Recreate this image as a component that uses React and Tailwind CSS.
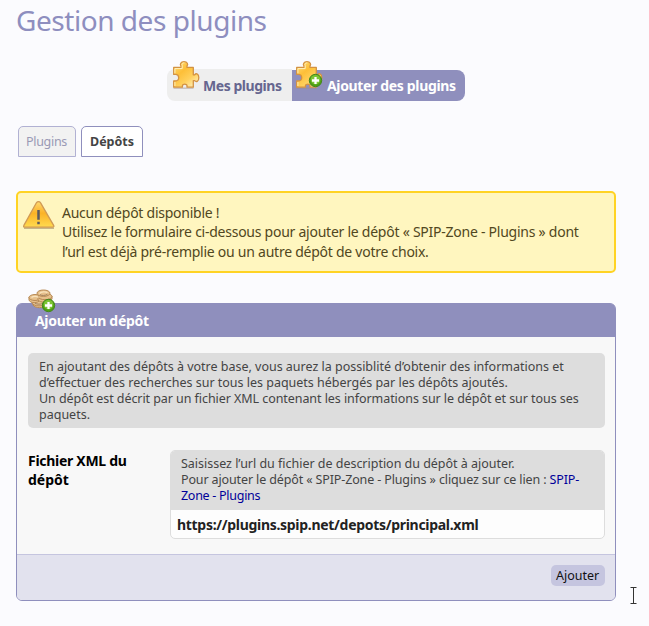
import React from "react";

function Puzzle({ plus, className }) {
  return (
    <svg className={className} width="32" height="32" viewBox="0 0 32 32">
      <defs>
        <linearGradient id="pz" x1="0" y1="0" x2=".8" y2="1">
          <stop offset="0" stopColor="#ffdf80" />
          <stop offset=".4" stopColor="#fdbf38" />
          <stop offset=".7" stopColor="#ffd05c" />
          <stop offset="1" stopColor="#ffeeb8" />
        </linearGradient>
      </defs>
      <path d="M2.5 28.2H22.5" stroke="#a08f84" strokeOpacity=".45" strokeWidth="1.5" />
      <path
        d="M2.7 7.4H10V6C8.6 4.4 9.6 1.7 13 1.7S17.4 4.4 16 6V7.4H22.3V14.8H23.6C25.2 12.8 27.8 13.8 27.8 17.8S25.2 22.2 23.6 20.6H22.3V27.2H16V25.8C16.2 23.8 11.4 23.6 11.4 25.8V27.2H2.7V20.8H5C8.6 21 8.6 14.8 5 14.4H2.7Z"
        fill="url(#pz)" stroke="#d39243" strokeWidth="1.3" strokeLinejoin="round"
      />
      <path d="M3.9 13.4V8.6H11.2V5.4C10.4 3.8 12 2.8 13.4 2.9M3.9 26V22" fill="none" stroke="#fff0bb" strokeWidth="1" />
      {plus && <Plus x={21.5} y={20.5} />}
    </svg>
  );
}

function Plus({ x, y }) {
  return (
    <g>
      <circle cx={x} cy={y} r="6.2" fill="#4ea015" stroke="#44861d" strokeWidth="1" />
      <circle cx={x} cy={y - 0.8} r="4.8" fill="#7cc535" />
      <path d={`M${x} ${y - 3.5}V${y + 3.5}M${x - 3.5} ${y}H${x + 3.5}`} stroke="#fff" strokeWidth="2.3" />
    </g>
  );
}

function Warning() {
  return (
    <svg className="mt-[7px] ml-[5px] shrink-0" width="32" height="30" viewBox="0 0 32 30">
      <defs>
        <linearGradient id="wn" x1="0" y1="0" x2="0" y2="1">
          <stop offset="0" stopColor="#ffd970" />
          <stop offset=".45" stopColor="#fbb226" />
          <stop offset="1" stopColor="#ffdb50" />
        </linearGradient>
      </defs>
      <path d="M1 28.1H31" stroke="#9a8560" strokeOpacity=".7" strokeWidth="1.4" />
      <path d="M15.5 1.7C16.4 1.7 17.1 2.1 17.6 2.8L30.6 25.3C31.2 26.6 30.7 27.2 29.5 27.2H1.9C.6 27.2.3 26.3.9 25.3L13.4 2.8C13.9 2.1 14.6 1.7 15.5 1.7Z" fill="url(#wn)" stroke="#d09a55" strokeWidth="1.3" />
      <path d="M15.5 10V19.7M15.5 21.8V24.2" stroke="#5b5960" strokeWidth="2.5" />
    </svg>
  );
}

function Coins() {
  return (
    <svg className="absolute -top-[16px] left-[10px]" width="32" height="28" viewBox="0 0 32 28">
      <g fill="#e6c08c" stroke="#b88a55" strokeWidth="1">
        <path d="M6 14V17C8 20.5 17 20.5 19 17V13Z" />
        <ellipse cx="12" cy="14.5" rx="7" ry="3.4" />
        <path d="M2 9V12C3 15.5 11 15.5 13 12V9Z" />
        <ellipse cx="8" cy="9.5" rx="6" ry="3" />
        <path d="M11 9V12C13 15 23 15 25 11V8Z" />
        <ellipse cx="18" cy="8.5" rx="7" ry="3.2" />
        <ellipse cx="16.5" cy="5.2" rx="6.5" ry="3.2" />
      </g>
      <path d="M12.5 5.5C14 3.6 19 3.4 20.5 4.8M4.5 9.5C6 8 10 8 11.5 9.5" fill="none" stroke="#f8e3bd" strokeWidth="1.3" />
      <path d="M13 6.6C15 7.8 18 7.8 20.5 6.2M8 15.2C10 16.5 14 16.5 16 15.2" fill="none" stroke="#8f7256" strokeWidth=".8" />
      <Plus x={21.5} y={17.5} />
    </svg>
  );
}

export default function App() {
  return (
    <div className="h-[626px] w-[649px] overflow-hidden bg-[#fbfbfe] pl-4 font-['Noto_Sans','Open_Sans',sans-serif] whitespace-nowrap text-[#444]">
      <h1 className="h-[61px] pt-[2px] text-[28px] leading-[36px] tracking-[-0.45px] text-[#8e8ebf]">
        <span>Gestion des plugins</span>
      </h1>

      <nav className="ml-[151px] flex h-[42px] text-sm font-bold">
        <a className="mt-2 flex h-8 w-[125px] rounded-l-lg bg-[#eee] text-[#66668f]">
          <Puzzle className="-mt-[9px] ml-1 shrink-0" />
          <span className="pt-[7px] leading-5 tracking-[-0.45px]">Mes plugins</span>
        </a>
        <a className="mt-[9px] flex h-[31px] w-[173px] rounded-r-lg bg-[#8f8fbd] text-white">
          <Puzzle plus className="-mt-[10px] ml-[2px] shrink-0" />
          <span className="pt-[6px] pl-px leading-5 tracking-[-0.34px]">Ajouter des plugins</span>
        </a>
      </nav>

      <div className="mt-[23px] ml-[2px] flex gap-[5px] text-[12.5px] leading-[29px]">
        <a className="h-[31px] w-[58px] rounded-t-[5px] border border-[#b1b1d3] bg-[#f2f2f2] pl-[7px] tracking-[-0.3px] text-[#9999b5]"><span>Plugins</span></a>
        <a className="h-[31px] w-[62px] rounded-t-[5px] border border-[#8f8fbd] bg-white pl-[8px] font-bold"><span>Dépôts</span></a>
      </div>

      <section className="mt-[34px] flex h-[82px] w-[600px] rounded-[5px] border-2 border-[#ffd324] bg-[#fff6bf] text-sm text-[#514721]">
        <Warning />
        <div className="pt-[10px] pl-[7px] leading-[19.4px] tracking-[-0.25px]">
          <p><span>Aucun dépôt disponible !</span></p>
          <p><span>Utilisez le formulaire ci-dessous pour ajouter le dépôt « SPIP-Zone - Plugins » dont</span></p>
          <p><span>l’url est déjà pré-remplie ou un autre dépôt de votre choix.</span></p>
        </div>
      </section>

      <section className="relative mt-[30px] h-[298px] w-[600px] rounded-[6px] border border-[#8f8fbd] bg-[#f8f8f8]">
        <h2 className="h-[33px] rounded-t-[4px] bg-[#8f8fbd] pt-[7px] pl-[18px] text-sm leading-5 font-bold tracking-[-0.32px] text-white">
          <Coins />
          <span>Ajouter un dépôt</span>
        </h2>
        <div className="mt-4 ml-[11px] h-[75px] w-[577px] rounded-[5px] bg-[#ddd] pt-[6px] pl-[11px] text-[12.5px] leading-4">
          <p className="tracking-[-0.01px]"><span>En ajoutant des dépôts à votre base, vous aurez la possiblité d’obtenir des informations et</span></p>
          <p className="tracking-[-0.015px]"><span>d’effectuer des recherches sur tous les paquets hébergés par les dépôts ajoutés.</span></p>
          <p className="tracking-[-0.065px]"><span>Un dépôt est décrit par un fichier XML contenant les informations sur le dépôt et sur tous ses</span></p>
          <p><span>paquets.</span></p>
        </div>
        <div className="mt-[22px] ml-[11px] flex">
          <label className="w-[142px] pt-[1px] text-sm leading-[19px] font-bold text-black">
            <span className="tracking-[-0.29px]">Fichier XML du</span><br /><span>dépôt</span>
          </label>
          <div className="h-[89px] w-[435px] overflow-hidden rounded-[5px] border border-[#ddd] bg-[#fdfdfd]">
            <div className="h-[59px] bg-[#ddd] pt-[5px] pl-[10px] text-[12.5px] leading-4">
              <p className="tracking-[-0.02px]"><span>Saisissez l’url du fichier de description du dépôt à ajouter.</span></p>
              <p className="tracking-[-0.13px]"><span>Pour ajouter le dépôt « SPIP-Zone - Plugins » cliquez sur ce lien : <a className="text-[#000099]">SPIP-</a></span></p>
              <p className="tracking-[-0.28px]"><a className="text-[#000099]">Zone - Plugins</a></p>
            </div>
            <div className="pt-[5px] pl-[6px] text-sm leading-5 font-bold tracking-[-0.3px] text-[#222]"><span>https://plugins.spip.net/depots/principal.xml</span></div>
          </div>
        </div>
        <footer className="mt-[15px] flex h-[46px] justify-end rounded-b-[5px] border-t border-[#c5c5df] bg-[#e2e2ee] pt-[10px] pr-[10px]">
          <button className="h-[21px] w-[54px] rounded-[5px] bg-[#c5c5df] pl-[5px] text-left text-[12.5px] leading-5 text-[#111]"><span>Ajouter</span></button>
        </footer>
      </section>
      <svg className="absolute top-[586px] left-[629px]" width="9" height="19" viewBox="0 0 9 19">
        <path d="M1.5 1.5H7.5M4.5 1.5V17.5M1.5 17.5H7.5" fill="none" stroke="#333" />
      </svg>
    </div>
  );
}
